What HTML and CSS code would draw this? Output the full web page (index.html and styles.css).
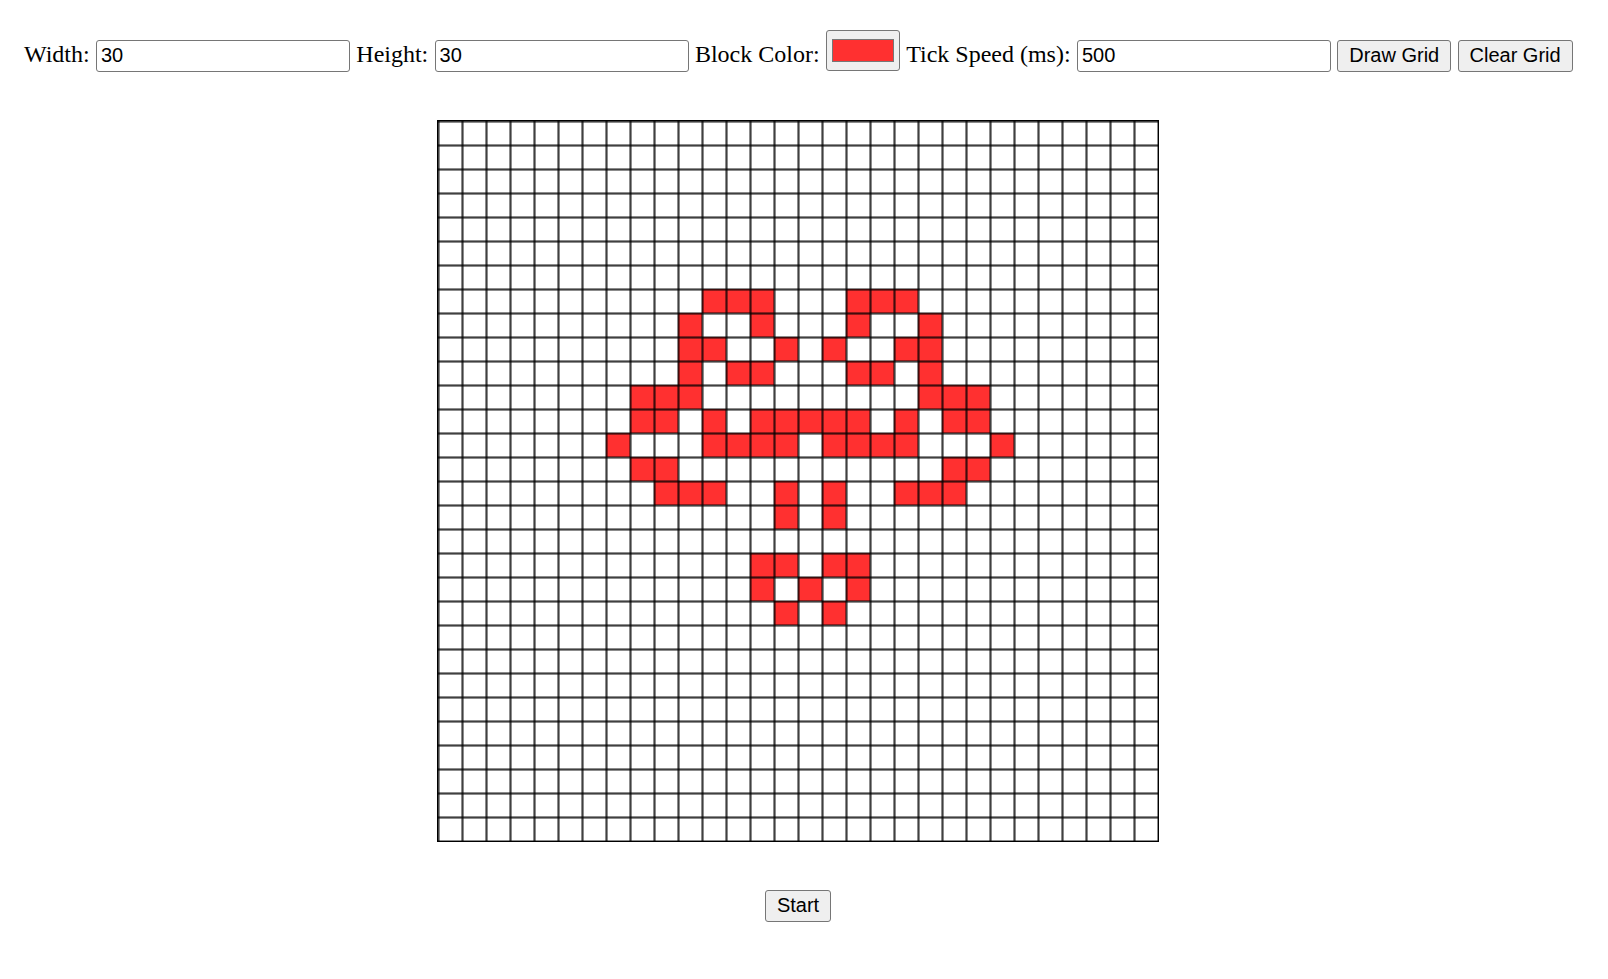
FILE: index.html
```html
<!DOCTYPE html>
<html lang="en">
<head>
<meta charset="utf-8">
<title>Grid</title>
<link rel="stylesheet" href="styles.css">
</head>
<body>
<div class="toolbar">
  <label class="lbl" for="w">Width:</label>
  <input class="txt" id="w" type="text" value="30">
  <label class="lbl" for="h">Height:</label>
  <input class="txt" id="h" type="text" value="30">
  <label class="lbl" for="c">Block Color:</label>
  <input class="color" id="c" type="color" value="#ff3030">
  <label class="lbl" for="t">Tick Speed (ms):</label>
  <input class="txt" id="t" type="text" value="500">
  <button class="btn" type="button">Draw Grid</button>
  <button class="btn" type="button">Clear Grid</button>
</div>
<div class="board">
  <div class="grid">
    <div class="on" style="grid-area: 8 / 12"></div>
    <div class="on" style="grid-area: 8 / 13"></div>
    <div class="on" style="grid-area: 8 / 14"></div>
    <div class="on" style="grid-area: 8 / 18"></div>
    <div class="on" style="grid-area: 8 / 19"></div>
    <div class="on" style="grid-area: 8 / 20"></div>

    <div class="on" style="grid-area: 9 / 11"></div>
    <div class="on" style="grid-area: 9 / 14"></div>
    <div class="on" style="grid-area: 9 / 18"></div>
    <div class="on" style="grid-area: 9 / 21"></div>

    <div class="on" style="grid-area: 10 / 11"></div>
    <div class="on" style="grid-area: 10 / 12"></div>
    <div class="on" style="grid-area: 10 / 15"></div>
    <div class="on" style="grid-area: 10 / 17"></div>
    <div class="on" style="grid-area: 10 / 20"></div>
    <div class="on" style="grid-area: 10 / 21"></div>

    <div class="on" style="grid-area: 11 / 11"></div>
    <div class="on" style="grid-area: 11 / 13"></div>
    <div class="on" style="grid-area: 11 / 14"></div>
    <div class="on" style="grid-area: 11 / 18"></div>
    <div class="on" style="grid-area: 11 / 19"></div>
    <div class="on" style="grid-area: 11 / 21"></div>

    <div class="on" style="grid-area: 12 / 9"></div>
    <div class="on" style="grid-area: 12 / 10"></div>
    <div class="on" style="grid-area: 12 / 11"></div>
    <div class="on" style="grid-area: 12 / 21"></div>
    <div class="on" style="grid-area: 12 / 22"></div>
    <div class="on" style="grid-area: 12 / 23"></div>

    <div class="on" style="grid-area: 13 / 9"></div>
    <div class="on" style="grid-area: 13 / 10"></div>
    <div class="on" style="grid-area: 13 / 12"></div>
    <div class="on" style="grid-area: 13 / 14"></div>
    <div class="on" style="grid-area: 13 / 15"></div>
    <div class="on" style="grid-area: 13 / 16"></div>
    <div class="on" style="grid-area: 13 / 17"></div>
    <div class="on" style="grid-area: 13 / 18"></div>
    <div class="on" style="grid-area: 13 / 20"></div>
    <div class="on" style="grid-area: 13 / 22"></div>
    <div class="on" style="grid-area: 13 / 23"></div>

    <div class="on" style="grid-area: 14 / 8"></div>
    <div class="on" style="grid-area: 14 / 12"></div>
    <div class="on" style="grid-area: 14 / 13"></div>
    <div class="on" style="grid-area: 14 / 14"></div>
    <div class="on" style="grid-area: 14 / 15"></div>
    <div class="on" style="grid-area: 14 / 17"></div>
    <div class="on" style="grid-area: 14 / 18"></div>
    <div class="on" style="grid-area: 14 / 19"></div>
    <div class="on" style="grid-area: 14 / 20"></div>
    <div class="on" style="grid-area: 14 / 24"></div>

    <div class="on" style="grid-area: 15 / 9"></div>
    <div class="on" style="grid-area: 15 / 10"></div>
    <div class="on" style="grid-area: 15 / 22"></div>
    <div class="on" style="grid-area: 15 / 23"></div>

    <div class="on" style="grid-area: 16 / 10"></div>
    <div class="on" style="grid-area: 16 / 11"></div>
    <div class="on" style="grid-area: 16 / 12"></div>
    <div class="on" style="grid-area: 16 / 15"></div>
    <div class="on" style="grid-area: 16 / 17"></div>
    <div class="on" style="grid-area: 16 / 20"></div>
    <div class="on" style="grid-area: 16 / 21"></div>
    <div class="on" style="grid-area: 16 / 22"></div>

    <div class="on" style="grid-area: 17 / 15"></div>
    <div class="on" style="grid-area: 17 / 17"></div>

    <div class="on" style="grid-area: 19 / 14"></div>
    <div class="on" style="grid-area: 19 / 15"></div>
    <div class="on" style="grid-area: 19 / 17"></div>
    <div class="on" style="grid-area: 19 / 18"></div>

    <div class="on" style="grid-area: 20 / 14"></div>
    <div class="on" style="grid-area: 20 / 16"></div>
    <div class="on" style="grid-area: 20 / 18"></div>

    <div class="on" style="grid-area: 21 / 15"></div>
    <div class="on" style="grid-area: 21 / 17"></div>
  </div>
  <button class="btn" type="button">Start</button>
</div>
</body>
</html>
```

FILE: styles.css
```css
html, body {
  margin: 0;
  padding: 0;
  background: #ffffff;
}

body {
  font-family: "Liberation Serif", "Times New Roman", serif;
  color: #000;
}

.toolbar {
  display: flex;
  align-items: flex-end;
  gap: 6.3px;
  padding: 30px 0 0 24px;
}

.lbl {
  font-size: 24px;
  line-height: 28px;
  margin-bottom: 4px;
  white-space: nowrap;
}

.txt {
  box-sizing: border-box;
  width: 254px;
  height: 32px;
  margin: 0;
  padding: 0 4px 2px 4px;
  border: 1px solid #767676;
  border-radius: 3px;
  background: #fff;
  font-family: "Liberation Sans", Arial, sans-serif;
  font-size: 20px;
  color: #000;
  outline: none;
}

.color {
  box-sizing: border-box;
  width: 74px;
  height: 41px;
  margin: 0 0 1px 0;
  padding: 0;
  border: 1px solid #767676;
  border-radius: 3px;
  background: #efefef;
  cursor: pointer;
}

.color::-webkit-color-swatch-wrapper {
  padding: 8px 5px;
}

.color::-webkit-color-swatch {
  border: 1px solid #777;
  border-radius: 0;
}

.btn {
  box-sizing: border-box;
  height: 32px;
  margin: 0;
  padding: 0 11px 2px 11px;
  border: 1px solid #767676;
  border-radius: 3px;
  background: #efefef;
  font-family: "Liberation Sans", Arial, sans-serif;
  font-size: 20px;
  color: #000;
  white-space: nowrap;
}

.board {
  display: flex;
  flex-direction: column;
  align-items: center;
  gap: 48px;
  margin-top: 48px;
  padding-right: 12px;
}

.grid {
  --d: rgba(0, 0, 0, 0.75);
  --g: rgba(0, 0, 0, 0.45);
  display: grid;
  grid-template-columns: repeat(30, 24px);
  grid-template-rows: repeat(30, 24px);
  border: 1px solid #000;
  background-color: #fff;
  background-image:
    linear-gradient(to right, var(--d) 0 1px, var(--g) 1px 2px, transparent 2px 23px, var(--g) 23px 24px),
    linear-gradient(to bottom, var(--d) 0 1px, var(--g) 1px 2px, transparent 2px 23px, var(--g) 23px 24px);
  background-size: 24px 24px;
}

.on {
  background-color: #ff3030;
  background-image:
    linear-gradient(to right, var(--d) 0 1px, var(--g) 1px 2px, transparent 2px 23px, var(--g) 23px 24px),
    linear-gradient(to bottom, var(--d) 0 1px, var(--g) 1px 2px, transparent 2px 23px, var(--g) 23px 24px);
  background-size: 24px 24px;
}
```
